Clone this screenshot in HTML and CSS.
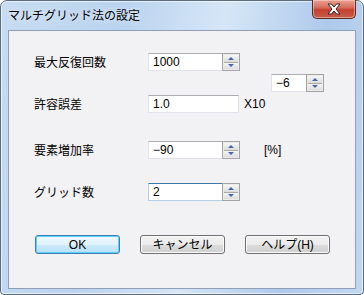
FILE: index.html
```html
<!DOCTYPE html>
<html lang="ja">
<head>
<meta charset="utf-8">
<link rel="stylesheet" href="styles.css">
</head>
<body>
<div class="window">
  <div class="titlebar">
    <span class="title">マルチグリッド法の設定</span>
    <div class="close">
      <svg width="16" height="12" viewBox="0 0 16 12">
        <path d="M2 1 L5.5 1 L8 4 L10.5 1 L14 1 L10 6 L14 11 L10.5 11 L8 8 L5.5 11 L2 11 L6 6 Z" fill="#fff" stroke="#3a2020" stroke-width="1" stroke-linejoin="round"/>
      </svg>
    </div>
  </div>
  <div class="client">
    <div class="row r1">
      <span class="label">最大反復回数</span>
      <div class="field w92"><span class="val">1000</span><span class="spin"><i class="up"></i><i class="dn"></i></span></div>
    </div>
    <div class="row r1b">
      <div class="field w53"><span class="val">−6</span><span class="spin"><i class="up"></i><i class="dn"></i></span></div>
    </div>
    <div class="row r2">
      <span class="label">許容誤差</span>
      <div class="field w91"><span class="val">1.0</span></div>
      <span class="unit u1">X10</span>
    </div>
    <div class="row r3">
      <span class="label">要素増加率</span>
      <div class="field w92"><span class="val">−90</span><span class="spin"><i class="up"></i><i class="dn"></i></span></div>
      <span class="unit u2">[%]</span>
    </div>
    <div class="row r4">
      <span class="label">グリッド数</span>
      <div class="field w92 focus"><span class="val">2</span><span class="spin"><i class="up"></i><i class="dn"></i></span></div>
    </div>
    <div class="buttons">
      <button class="btn default">OK</button>
      <button class="btn">キャンセル</button>
      <button class="btn">ヘルプ(H)</button>
    </div>
  </div>
</div>
</body>
</html>
```

FILE: styles.css
```css
* { box-sizing: border-box; }
html, body { margin: 0; padding: 0; }
body {
  width: 364px;
  height: 295px;
  overflow: hidden;
  background: #ffffff;
  font-family: "Liberation Sans", "Noto Sans CJK JP", sans-serif;
  font-size: 12px;
  color: #000;
}
.window {
  width: 364px;
  height: 295px;
  border: 1px solid #5b6d83;
  border-radius: 7px 7px 4px 4px;
  background: linear-gradient(100deg, #c8dcf2 0%, #bad3ef 30%, #d6e6f7 55%, #aecaeb 80%, #c2d8f2 100%);
  display: flex;
  flex-direction: column;
  box-shadow: inset 0 0 0 1px rgba(255,255,255,0.6);
}
.titlebar {
  height: 29px;
  display: flex;
  align-items: flex-start;
  justify-content: space-between;
  padding-left: 7px;
  padding-right: 7px;
}
.title {
  font-family: "Noto Sans CJK JP", sans-serif;
  font-size: 12px;
  line-height: 12px;
  margin-top: 8px;
  color: #000;
  text-shadow: 0 0 6px rgba(255,255,255,0.9);
}
.close {
  width: 44px;
  height: 19px;
  margin-top: -1px;
  border: 1px solid #5a2a25;
  border-top: none;
  border-radius: 0 0 5px 5px;
  background: linear-gradient(#e8a194 0%, #d8705f 40%, #c4412e 55%, #c85d4c 100%);
  box-shadow: inset 0 0 0 1px rgba(255,220,210,0.5);
  display: flex;
  align-items: center;
  justify-content: center;
}
.client {
  margin: 0 7px 0 7px;
  height: 259px;
  background: #f2f1f4;
  border: 1px solid #8ea0b7;
  display: flex;
  flex-direction: column;
  padding-left: 25px;
}
.row {
  display: flex;
  align-items: center;
  height: 18px;
}
.r1 { margin-top: 22px; }
.r1b { margin-top: 3px; padding-left: 237px; }
.r2 { margin-top: 3px; }
.r3 { margin-top: 28px; }
.r4 { margin-top: 24px; }
.label {
  width: 114px;
  font-family: "Noto Sans CJK JP", sans-serif;
  line-height: 14px;
}
.field {
  position: relative;
  height: 18px;
  background: #fff;
  border: 1px solid #e2e3ea;
  border-top-color: #abadb3;
  display: flex;
  align-items: center;
}
.field.focus {
  border-color: #b5cfe7;
  border-top-color: #3d7bad;
}
.w92 { width: 92px; }
.w91 { width: 91px; }
.w53 { width: 53px; }
.val {
  flex: 1;
  padding-left: 4px;
  line-height: 14px;
}
.spin {
  width: 18px;
  height: 18px;
  margin: -1px -1px -1px 0;
  border: 1px solid #a3a3a3;
  background: #ececec;
  display: flex;
  flex-direction: column;
  padding: 1px;
}
.spin i {
  flex: 1;
  display: flex;
  align-items: center;
  justify-content: center;
  background: linear-gradient(#f6f6f6, #dcdcdc);
}
.spin i.up { border-bottom: 1px solid #a8a8a8; }
.spin i::after {
  content: "";
  width: 0;
  height: 0;
  border-left: 3px solid transparent;
  border-right: 3px solid transparent;
}
.spin i.up::after { border-bottom: 3px solid #4a64a8; }
.spin i.dn::after { border-top: 3px solid #4a64a8; }
.unit { line-height: 14px; }
.u1 { margin-left: 5px; }
.u2 { margin-left: 24px; }
.buttons {
  display: flex;
  margin-top: 34px;
  margin-left: 1px;
  gap: 20px;
}
.btn {
  width: 85px;
  height: 19px;
  padding: 0;
  font-family: "Liberation Sans", "Noto Sans CJK JP", sans-serif;
  font-size: 12px;
  font-weight: 400;
  line-height: 14px;
  color: #000;
  border: 1px solid #707070;
  border-radius: 3px;
  background: linear-gradient(#f3f3f3 0%, #ebebeb 50%, #dddddd 51%, #cfcfcf 100%);
  box-shadow: inset 0 0 0 1px #fcfcfc;
}
.btn.default {
  border-color: #3c7fb1;
  background: linear-gradient(#eef8fe 0%, #e0f2fc 50%, #cdeafb 51%, #b8e1f8 100%);
  box-shadow: inset 0 0 0 1px #5fd0f5;
}
```
